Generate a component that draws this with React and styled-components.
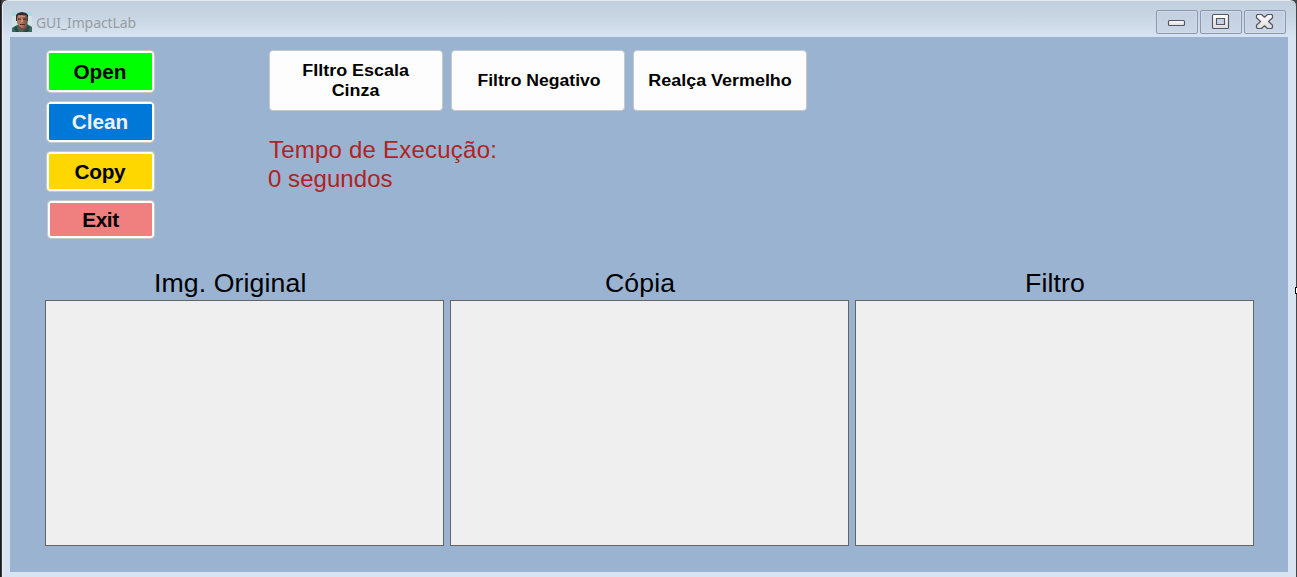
import React from "react";
import styled, { createGlobalStyle } from "styled-components";

const GlobalStyle = createGlobalStyle`
  *, *::before, *::after { box-sizing: border-box; }
  body {
    margin: 0;
    overflow: hidden;
    background: #2a2628;
    font-family: "Liberation Sans", Arial, sans-serif;
  }
`;

const Desktop = styled.div`
  position: relative;
  height: 577px;
  padding: 0 1px 0 2px;
  background: linear-gradient(90deg, #1d191c 0 1px, #3b383b 1px 2px, #45464a 2px);
`;

const Window = styled.div`
  display: flex;
  flex-direction: column;
  height: 577px;
  padding: 0 8px 5px 7px;
  border-left: 1px solid #e9f0f8;
  border-top: 1px solid #e3e9f0;
  border-radius: 6px 6px 0 0;
  background: linear-gradient(180deg, #c1cedb 0, #c8d5e3 16px, #d8e4f2 36px);
`;

const TitleBar = styled.header`
  display: flex;
  flex: none;
  height: 36px;
  padding: 0 2px;
`;

const AppIcon = styled.svg`
  width: 20px;
  height: 20px;
  margin-top: 11px;
`;

const Title = styled.h1`
  flex: 1;
  margin: 11px 0 0 4px;
  font: 400 14px/21px "Noto Sans", sans-serif;
  letter-spacing: -0.1px;
  color: #979ca2;
`;

const WindowControls = styled.div`
  display: flex;
  gap: 2px;
  margin-top: 9px;
`;

const ControlButton = styled.button`
  display: flex;
  width: 42px;
  height: 24px;
  padding: 0;
  border: 1px solid #8a97b3;
  border-radius: 2px;
  background: linear-gradient(180deg, #c3cfdf, #cad7e6);
  box-shadow: inset 0 0 0 1px #d0dbe9;

  svg { width: 40px; height: 22px; }
`;

const Client = styled.main`
  flex: 1;
  min-height: 0;
  padding: 13px 34px 0 35px;
  background: #99b3d1;
`;

const Toolbar = styled.section`
  display: flex;
  align-items: flex-start;
  height: 217px;
`;

const ActionList = styled.nav`
  display: flex;
  flex-direction: column;
  width: 224px;
  padding-left: 1px;
`;

const ActionButton = styled.button`
  width: ${(p) => p.$width || 109}px;
  height: ${(p) => p.$height}px;
  margin: 0 0 ${(p) => p.$gap || 0}px ${(p) => p.$indent || 0}px;
  padding: 0 1px 0 0;
  border: 1px solid #c6c8cc;
  border-radius: 4px;
  background: ${(p) => p.$color};
  box-shadow: inset 0 0 0 2px #fff;
  color: ${(p) => p.$ink || "#000"};
  font: 700 20.8px/24px "Liberation Sans", Arial, sans-serif;
  letter-spacing: ${(p) => p.$tracking || 0}px;
`;

const FilterArea = styled.div`
  display: flex;
  flex-direction: column;
`;

const FilterRow = styled.div`
  display: flex;
  gap: 8px;
`;

const FilterButton = styled.button`
  display: flex;
  align-items: center;
  justify-content: center;
  width: 174px;
  height: 61px;
  padding: 0 0 0 ${(p) => p.$nudge || 0}px;
  border: 1px solid #c6c8cc;
  border-radius: 4px;
  background: #fdfdfd;
  color: #000;
  font: 700 16px/20px "Liberation Sans", Arial, sans-serif;
`;

const WideText = styled.span`
  flex: none;
  white-space: pre;
  transform: scaleX(${(p) => p.$scale});
`;

const Elapsed = styled.p`
  margin: 24px 0 0 -1px;
  color: #b22222;
  font-size: 24px;
  line-height: 29px;
`;

const ElapsedLabel = styled.span`
  display: block;
  padding-left: 1px;
  letter-spacing: 0.22px;
`;

const ElapsedValue = styled.span`
  display: block;
  letter-spacing: 0.05px;
`;

const Panels = styled.section`
  display: flex;
  gap: 6px;
`;

const Panel = styled.figure`
  width: 399px;
  margin: 0;
`;

const PanelTitle = styled.figcaption`
  height: 33px;
  padding-left: ${(p) => p.$indent}px;
  color: #000;
  font-size: 26.67px;
  line-height: 32px;
  letter-spacing: 0.1px;
`;

const Preview = styled.div`
  height: 246px;
  border: 1px solid #646464;
  background: #efefef;
`;

const ResizeCursor = styled.span`
  position: absolute;
  top: 287px;
  right: 0;
  width: 2px;
  height: 7px;
  border: 1px solid #000;
  border-right: 0;
  background: #fff;
`;

const Portrait = () => (
  <AppIcon viewBox="0 0 20 20">
    <defs>
      <linearGradient id="face" x1="0" x2="1">
        <stop offset="0" stopColor="#a8705a" />
        <stop offset=".4" stopColor="#b57c66" />
        <stop offset="1" stopColor="#6a4940" />
      </linearGradient>
    </defs>
    <path fill="#a9dbe4" d="M0 0h20v20H0z" />
    <path fill="#d2e3e5" d="M0 4h5v10H0zM16 4h4v10h-4z" />
    <path fill="#3a6a62" d="M0 16l5-3 10-1 5 3v5H0z" />
    <path fill="#264a44" d="M4 14l3 6H4l-2-4zm11-1l3 2-2 5h-5z" />
    <path fill="#754c40" d="M6 12h9v4l-4 3-5-3z" />
    <path fill="#35292a" d="M4 9V3l2-2 4-1 4 1 2 2v6z" />
    <path fill="url(#face)" d="M5 5l1-2h8l1.5 2v6L14 14l-3 2h-1l-3-2-2-3z" />
    <path fill="#49302d" d="M6 6.5h3v1.2H6zm5 0h3v1.2h-3zM8 12h5v1H8z" />
    <path fill="#c38f75" d="M9 7h2v3H9zM7 4h6v1H7z" />
  </AppIcon>
);

const ControlDefs = () => (
  <defs>
    <linearGradient id="metal" x2="0" y2="1">
      <stop stopColor="#fff" />
      <stop offset="1" stopColor="#dcdcda" />
    </linearGradient>
  </defs>
);

const MinimizeIcon = () => (
  <svg viewBox="0 0 40 22">
    <ControlDefs />
    <rect x="11.5" y="9.5" width="16" height="5" rx="1" fill="url(#metal)" stroke="#535666" strokeWidth="1.15" />
  </svg>
);

const MaximizeIcon = () => (
  <svg viewBox="0 0 40 22">
    <path
      d="M12.5 3.5h14a1 1 0 0 1 1 1v12a1 1 0 0 1-1 1h-14a1 1 0 0 1-1-1v-12a1 1 0 0 1 1-1ZM15.5 7.5v6h8v-6Z"
      fill="url(#metal)"
      fillRule="evenodd"
      stroke="#535666"
      strokeWidth="1.15"
    />
  </svg>
);

const CloseIcon = () => (
  <svg viewBox="0 0 40 22">
    <path
      d="M12.5 3.5h4l3 2.7 3-2.7h4l1 1v2.2l-4 3.8 4 3.8v2.2l-1 1h-4l-3-2.7-3 2.7h-4l-1-1v-2.2l4-3.8-4-3.8V4.5Z"
      fill="url(#metal)"
      stroke="#535666"
      strokeWidth="1.2"
      strokeLinejoin="round"
    />
  </svg>
);

export default function App() {
  return (
    <>
      <GlobalStyle />
      <Desktop>
        <Window>
          <TitleBar>
            <Portrait />
            <Title>GUI_ImpactLab</Title>
            <WindowControls>
              <ControlButton aria-label="Minimize"><MinimizeIcon /></ControlButton>
              <ControlButton aria-label="Maximize"><MaximizeIcon /></ControlButton>
              <ControlButton aria-label="Close"><CloseIcon /></ControlButton>
            </WindowControls>
          </TitleBar>
          <Client>
            <Toolbar>
              <ActionList>
                <ActionButton $height={43} $gap={8} $color="#00ff00">Open</ActionButton>
                <ActionButton $height={42} $gap={8} $color="#0078d7" $ink="#f0f0f0">Clean</ActionButton>
                <ActionButton $height={41} $gap={8} $color="#ffd700" $tracking={-0.3}>Copy</ActionButton>
                <ActionButton $height={39} $width={108} $indent={1} $color="#f08080" $tracking={-0.4}>Exit</ActionButton>
              </ActionList>
              <FilterArea>
                <FilterRow>
                  <FilterButton><WideText $scale={1.12}>{"FIltro Escala\nCinza"}</WideText></FilterButton>
                  <FilterButton $nudge={2}><WideText $scale={1.1}>Filtro Negativo</WideText></FilterButton>
                  <FilterButton $nudge={1}><WideText $scale={1.12}>Realça Vermelho</WideText></FilterButton>
                </FilterRow>
                <Elapsed>
                  <ElapsedLabel>Tempo de Execução:</ElapsedLabel>
                  <ElapsedValue>0 segundos</ElapsedValue>
                </Elapsed>
              </FilterArea>
            </Toolbar>
            <Panels>
              <Panel>
                <PanelTitle $indent={109}>Img. Original</PanelTitle>
                <Preview />
              </Panel>
              <Panel>
                <PanelTitle $indent={155}>Cópia</PanelTitle>
                <Preview />
              </Panel>
              <Panel>
                <PanelTitle $indent={170}>Filtro</PanelTitle>
                <Preview />
              </Panel>
            </Panels>
          </Client>
        </Window>
        <ResizeCursor />
      </Desktop>
    </>
  );
}
